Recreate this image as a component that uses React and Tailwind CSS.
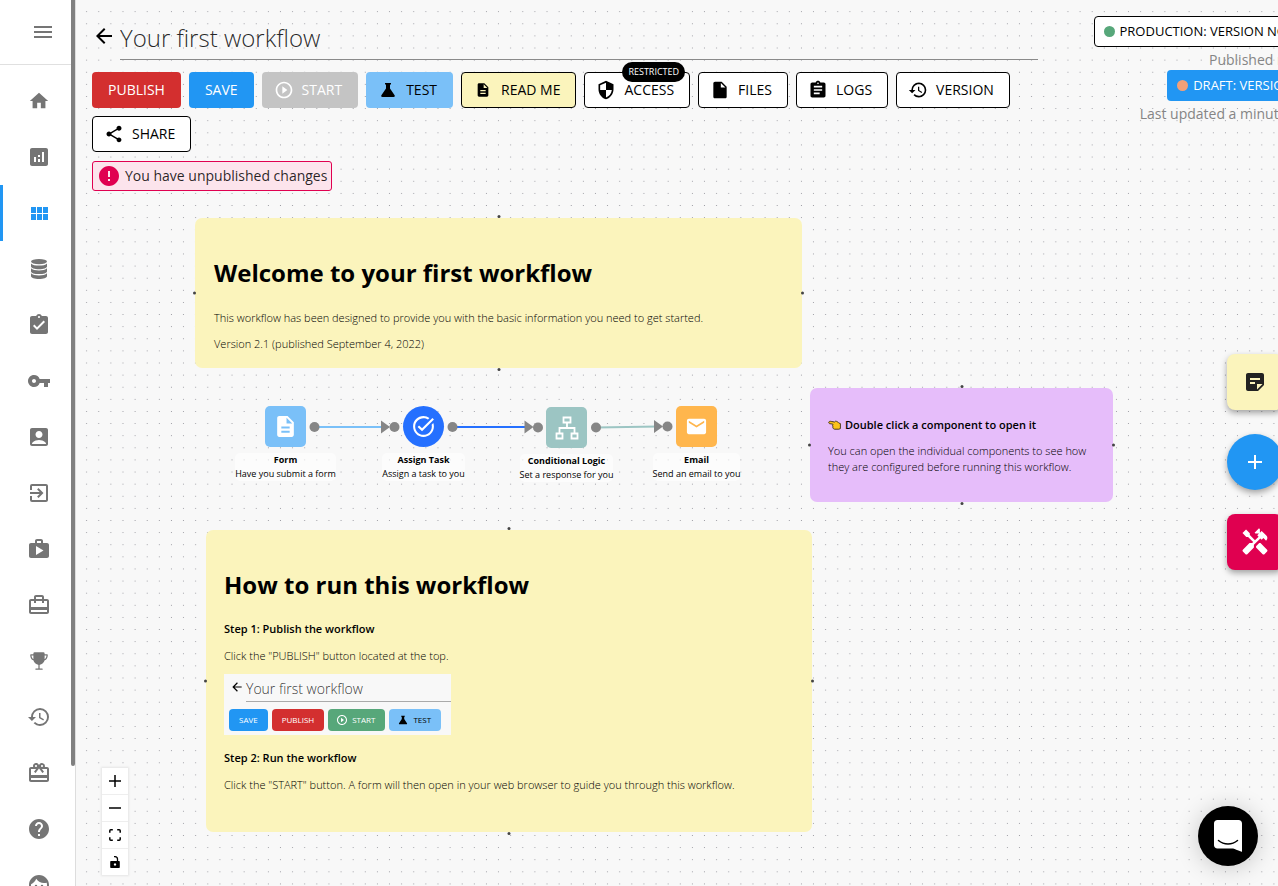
import React from "react";
import {
  MdMenu, MdHome, MdAnalytics, MdAssignmentTurnedIn, MdVpnKey, MdAccountBox, MdExitToApp,
  MdCardTravel, MdHistory, MdCardGiftcard, MdHelp, MdFace, MdArrowBack, MdPlayCircleOutline,
  MdDescription, MdSecurity, MdInsertDriveFile, MdAssignment, MdShare, MdError, MdTaskAlt,
  MdEmail, MdAdd, MdHandyman, MdStickyNote2,
} from "react-icons/md";
import { IoTrophy } from "react-icons/io5";

function Grid() {
  return (
    <svg viewBox="0 0 17 13" className="h-[13px] w-[17px]" fill="currentColor">
      <path d="M0 0h5v6H0zM6 0h5v6H6zM12 0h5v6h-5zM0 7h5v6H0zM6 7h5v6H6zM12 7h5v6h-5z" />
    </svg>
  );
}

function Database() {
  return (
    <svg viewBox="0 0 16 20" className="h-5 w-4" fill="currentColor">
      <ellipse cx="8" cy="2.6" rx="8" ry="2.6" />
      <path d="M0 4.4c1.4 1.500 4.500 2.200 8 2.200s6.600-.7 8-2.200v3.100c0 1.500-3.600 2.700-8 2.700s-8-1.200-8-2.700z" />
      <path d="M0 9.300c1.400 1.500 4.500 2.200 8 2.200s6.600-.7 8-2.200v3.100c0 1.500-3.600 2.700-8 2.700s-8-1.200-8-2.700z" />
      <path d="M0 14.200c1.400 1.500 4.500 2.200 8 2.200s6.600-.7 8-2.200v3.100c0 1.500-3.600 2.700-8 2.700s-8-1.200-8-2.700z" />
    </svg>
  );
}

function PlayCase() {
  return (
    <svg viewBox="0 0 24 24" className="size-6" fill="currentColor">
      <path
        fillRule="evenodd"
        d="M16 6V4c0-1.110-.89-2-2-2h-4c-1.110 0-2 .89-2 2v2H4c-1.110 0-2 .89-2 2v11c0 1.110.89 2 2 2h16c1.110 0 2-.89 2-2V8c0-1.110-.89-2-2-2zm-6-2h4v2h-4zM9 18V9l7.500 4.500z"
      />
    </svg>
  );
}

function Flask({ className }) {
  return (
    <svg viewBox="0 0 20 20" className={className} fill="currentColor">
      <path d="M7 3h6v1.500h-1v4l4.600 6.800c.7 1-.1 1.700-1 1.700H4.400c-.9 0-1.700-.7-1-1.700L8 8.500v-4H7z" />
    </svg>
  );
}

function Sitemap() {
  return (
    <svg viewBox="0 0 24 24" className="size-6" fill="none" stroke="currentColor" strokeWidth="1.800">
      <path d="M8.500 1.500h7v5h-7zM1.500 17.500h6v5h-6zM16.500 17.500h6v5h-6zM12 6.500v5.500M4.500 17.500V12h15v5.500" />
    </svg>
  );
}

function PointLeft() {
  return (
    <svg viewBox="0 0 13 12" className="h-3 w-[13px] shrink-0" role="img" aria-label="Pointing left">
      <path
        d="M.8 3.200c.3-1 1.400-1 2.400-.8l3.300.6 1-.8c1.300 0 2.500.8 3.300 1.800l1.600.6v5l-1.600.6H6.700c-.9 0-1.500-.5-1.400-1.200-.6-.3-.7-.9-.4-1.400-.5-.4-.5-1-.1-1.500.2-.4.300-.7.100-.9L1.500 4.600c-.6-.2-.9-.8-.7-1.400z"
        fill="#fcc21b" stroke="#3b2e12" strokeWidth=".9"
      />
    </svg>
  );
}

const navItems = [
  ["Home", <MdHome className="size-[22px]" />],
  ["Reports", <MdAnalytics className="size-6" />],
  ["Workflows", <Grid />],
  ["Data", <Database />],
  ["Tasks", <MdAssignmentTurnedIn className="size-6" />],
  ["Credentials", <MdVpnKey className="size-6" />],
  ["Contacts", <MdAccountBox className="size-6" />],
  ["Imports", <MdExitToApp className="size-6" />],
  ["Runs", <PlayCase />],
  ["Packages", <MdCardTravel className="size-6" />],
  ["Achievements", <IoTrophy className="size-5" />],
  ["History", <MdHistory className="size-6" />],
  ["Rewards", <MdCardGiftcard className="size-6" />],
  ["Help", <MdHelp className="size-6" />],
  ["Profile", <MdFace className="size-6" />],
];

function Sidebar() {
  return (
    <aside className="relative flex w-[76px] shrink-0 flex-col overflow-hidden border-r border-[#dddddd] bg-white text-[#757575]">
      <div className="flex h-[65px] shrink-0 items-center justify-center border-b border-[#e0e0e0] pl-2.5">
        <button aria-label="Menu"><MdMenu className="size-6" /></button>
      </div>
      <nav className="flex flex-col pt-2">
        {navItems.map(([label, icon]) => (
          <a
            key={label}
            href="#"
            aria-label={label}
            className={
              label === "Workflows"
                ? "flex h-14 shrink-0 items-center justify-center border-l-[3px] border-[#2196f3] text-[#2196f3]"
                : "flex h-14 shrink-0 items-center justify-center border-l-[3px] border-transparent"
            }
          >
            {icon}
          </a>
        ))}
      </nav>
      <div className="absolute top-0 right-0 h-[766px] w-1 rounded-b-sm bg-[#808080]" />
    </aside>
  );
}

const base = "relative flex h-9 items-center gap-2 rounded text-sm ";
const outlined = base + "border border-black pr-[15px] pl-[11px] text-black ";
const actions = [
  { label: "PUBLISH", cls: base + "bg-[#d32f2f] px-4 text-white" },
  { label: "SAVE", cls: base + "bg-[#2196f3] px-4 text-white" },
  { label: "START", cls: base + "bg-[#c4c4c4] pr-4 pl-3 text-white", icon: <MdPlayCircleOutline className="size-5" /> },
  { label: "TEST", cls: base + "bg-[#7ac0f8] pr-4 pl-3 text-black", icon: <Flask className="size-5" /> },
  { label: "READ ME", cls: outlined + "bg-[#fbf4bc]", icon: <MdDescription className="mx-0.5 size-4" /> },
  { label: "ACCESS", cls: outlined + "bg-white", icon: <MdSecurity className="size-5" />, badge: "RESTRICTED" },
  { label: "FILES", cls: outlined + "bg-white", icon: <MdInsertDriveFile className="size-5" /> },
  { label: "LOGS", cls: outlined + "bg-white", icon: <MdAssignment className="size-5" /> },
  { label: "VERSION", cls: outlined + "bg-white", icon: <MdHistory className="size-5" /> },
  { label: "SHARE", cls: outlined + "bg-white", icon: <MdShare className="size-5" /> },
];

function Header() {
  return (
    <header className="relative -mr-9 flex items-start gap-14 pt-4 pl-4">
      <div className="flex min-w-0 flex-1 flex-col items-start">
        <div className="flex w-full items-start gap-1">
          <button aria-label="Back" className="mt-2"><MdArrowBack className="size-6" /></button>
          <input
            aria-label="Workflow name"
            defaultValue="Your first workflow"
            className="h-11 min-w-0 flex-1 border-b border-[#8a8a8a] bg-transparent text-2xl font-light text-black/85 outline-none"
          />
        </div>
        <div className="mt-3 flex flex-wrap gap-2">
          {actions.map((a) => (
            <button key={a.label} className={a.cls} disabled={a.label === "START"}>
              {a.icon}
              {a.label}
              {a.badge && (
                <span className="absolute -top-[11px] right-1 rounded-full bg-black px-1.5 text-[9px] leading-5 font-medium text-white">
                  {a.badge}
                </span>
              )}
            </button>
          ))}
        </div>
        <div className="mt-[9px] flex h-[30px] items-center gap-1 rounded-[3px] border border-[#e00050] bg-[#fce4ec] pr-1 pl-1 text-sm text-black/85">
          <MdError className="size-6 text-[#e00050]" />
          You have unpublished changes
        </div>
      </div>
      <div className="flex shrink-0 flex-col items-end text-sm whitespace-nowrap text-[#858585]">
        <button className="flex h-[31px] items-center gap-[5px] rounded border border-black bg-white px-[9px] text-[13px] text-black">
          <span className="size-[11px] rounded-full bg-[#57a77a]" />
          PRODUCTION: VERSION NONE
        </button>
        <p className="mt-0.5 leading-[21px]">Published never</p>
        <button className="flex h-[31px] items-center gap-[5px] rounded bg-[#2196f3] px-[10px] text-[13px] text-white">
          <span className="size-[11px] rounded-full bg-[#f3a078]" />
          DRAFT: VERSION 1
        </button>
        <p className="mt-0.5 leading-[21px]">Last updated a minute ago</p>
      </div>
    </header>
  );
}

function Handles() {
  return (
    <>
      <i className="absolute -top-[3px] left-1/2 size-[3px] -translate-x-1/2 rounded-full bg-[#444]" />
      <i className="absolute -bottom-[3px] left-1/2 size-[3px] -translate-x-1/2 rounded-full bg-[#444]" />
      <i className="absolute top-1/2 -left-[2px] size-[3px] -translate-y-1/2 rounded-full bg-[#444]" />
      <i className="absolute top-1/2 -right-[2px] size-[3px] -translate-y-1/2 rounded-full bg-[#444]" />
    </>
  );
}

function Preview() {
  const b = "flex h-[22px] items-center rounded-sm text-[8px] font-normal ";
  return (
    <div className="mt-[10px] flex w-[227px] flex-col bg-[#f8f8f8] pb-1">
      <div className="flex items-start gap-0.5 pl-1.5">
        <MdArrowBack className="mt-1.5 size-3.5" />
        <span className="h-7 flex-1 border-b border-[#aaa] text-sm leading-[29px] font-light text-black/80">Your first workflow</span>
      </div>
      <div className="mt-[7px] flex gap-1 pl-[5px]">
        <button className={b + "bg-[#2196f3] px-[10px] text-white"}>SAVE</button>
        <button className={b + "bg-[#d32f2f] px-[10px] text-white"}>PUBLISH</button>
        <button className={b + "gap-1 bg-[#57a77a] pr-[10px] pl-2 text-white"}><MdPlayCircleOutline className="size-3" />START</button>
        <button className={b + "gap-1 bg-[#7ac0f8] pr-[10px] pl-2 text-black"}><Flask className="size-3" />TEST</button>
      </div>
    </div>
  );
}

const nodes = [
  { name: "Form", text: "Have you submit a form", pos: "left-[189px] top-[406px]", box: "rounded-[5px] bg-[#7ac0f8]", icon: <MdDescription className="size-[25px]" /> },
  { name: "Assign Task", text: "Assign a task to you", pos: "left-[327px] top-[406px]", box: "rounded-full bg-[#2570ff]", icon: <MdTaskAlt className="size-[25px]" /> },
  { name: "Conditional Logic", text: "Set a response for you", pos: "left-[470px] top-[407px]", box: "rounded-[5px] bg-[#9cc5c3]", icon: <Sitemap /> },
  { name: "Email", text: "Send an email to you", pos: "left-[600px] top-[406px]", box: "rounded-[5px] bg-[#ffb64d]", icon: <MdEmail className="size-[23px]" /> },
];

function Canvas() {
  return (
    <div className="absolute inset-0 text-[11px] leading-4 font-[330] text-black">
      <svg className="absolute inset-0 h-full w-full" aria-hidden="true">
        <pattern id="dots" x="4.600" y="5.600" width="12.115" height="12.115" patternUnits="userSpaceOnUse">
          <circle cx="6" cy="6" r="0.500" fill="#81818a" />
        </pattern>
        <rect width="100%" height="100%" fill="url(#dots)" />
      </svg>

      <section className="absolute top-[218px] left-[119px] w-[607px] rounded-[7px] bg-[#fbf4bc] px-[19px] pt-10 pb-4">
        <Handles />
        <h1 className="text-2xl leading-[30px] font-bold">Welcome to your first workflow</h1>
        <p className="mt-[22px]">This workflow has been designed to provide you with the basic information you need to get started.</p>
        <p className="mt-[10px]">Version 2.1 (published September 4, 2022)</p>
      </section>

      <section className="absolute top-[388px] left-[734px] w-[303px] rounded-[7px] bg-[#e6bdfa] px-[18px] pt-[29px] pb-[27px]">
        <Handles />
        <p className="flex items-center gap-1 font-semibold"><PointLeft />Double click a component to open it</p>
        <p className="mt-[10px]">You can open the individual components to see how they are configured before running this workflow.</p>
      </section>

      <section className="absolute top-[530px] left-[130px] w-[606px] rounded-[7px] bg-[#fbf4bc] px-[18px] pt-10 pb-[39px]">
        <Handles />
        <h1 className="text-2xl leading-[30px] font-bold">How to run this workflow</h1>
        <p className="mt-[21px] font-semibold">Step 1: Publish the workflow</p>
        <p className="mt-[11px]">Click the "PUBLISH" button located at the top.</p>
        <Preview />
        <p className="mt-[15px] font-semibold">Step 2: Run the workflow</p>
        <p className="mt-[11px]">Click the "START" button. A form will then open in your web browser to guide you through this workflow.</p>
      </section>

      <svg className="absolute top-[416px] left-[230px] h-6 w-[380px]" viewBox="306 416 380 24" aria-hidden="true">
        <path d="M314 427h75" stroke="#7ac0f8" strokeWidth="2" />
        <path d="M452 427h76" stroke="#2570ff" strokeWidth="2" />
        <path d="M596 427.500l62-1" stroke="#9cc5c3" strokeWidth="2" />
        <g fill="#868686">
          <circle cx="314.500" cy="427" r="5" /><circle cx="394.500" cy="427" r="5" />
          <circle cx="452.500" cy="427" r="5" /><circle cx="538" cy="427.500" r="5" />
          <circle cx="596" cy="427.500" r="5" /><circle cx="667.500" cy="426.500" r="5" />
          <path d="M381 420.500l9 6.500-9 6.500zM524.500 420.500l9 6.500-9 6.500zM654 420l9 6.500-9 6.500z" />
        </g>
      </svg>
      {nodes.map((n) => (
        <div key={n.name} className={"absolute flex w-[41px] flex-col items-center font-normal " + n.pos}>
          <div className={"flex size-[41px] items-center justify-center text-white " + n.box}>{n.icon}</div>
          <div className="mt-1.5 rounded-[5px] bg-white/60 text-center text-[9px] leading-[14px] whitespace-nowrap">
            <p className="font-bold">{n.name}</p>
            <p>{n.text}</p>
          </div>
        </div>
      ))}
    </div>
  );
}

function ZoomControls() {
  const b = "flex size-[26px] items-center justify-center bg-white";
  return (
    <div className="absolute bottom-[11px] left-[26px] flex flex-col gap-px bg-[#eeeeee] shadow-[0_0_2px_1px_rgba(0,0,0,0.08)]">
      <button className={b} aria-label="Zoom in">
        <svg viewBox="0 0 12 12" className="size-3"><path d="M6 0v12M0 6h12" stroke="#000" strokeWidth="1.500" /></svg>
      </button>
      <button className={b} aria-label="Zoom out">
        <svg viewBox="0 0 12 12" className="size-3"><path d="M0 6h12" stroke="#000" strokeWidth="1.500" /></svg>
      </button>
      <button className={b} aria-label="Fit view">
        <svg viewBox="0 0 12 12" className="size-3" fill="none" stroke="#000" strokeWidth="1.500">
          <path d="M.8 3.800v-2q0-1 1-1h2M8.200.8h2q1 0 1 1v2M11.200 8.200v2q0 1-1 1h-2M3.800 11.200h-2q-1 0-1-1v-2" />
        </svg>
      </button>
      <button className={b} aria-label="Unlock">
        <svg viewBox="0 0 10 12" className="h-3 w-2.5">
          <path fillRule="evenodd" d="M1 5h8q.8 0 .8.800v5.400q0 .8-.8.800H1q-.8 0-.8-.8V5.800Q.2 5 1 5zM5 7.300a1.200 1.200 0 1 0 .01 0z" />
          <path d="M7.500 5V3Q7.500 1 5 .7L4 .7" fill="none" stroke="#000" strokeWidth="1.300" />
        </svg>
      </button>
    </div>
  );
}

export default function App() {
  const fab = "flex size-14 items-center justify-center shadow-[0_3px_6px_rgba(0,0,0,0.35)] ";
  return (
    <div className="flex h-screen overflow-hidden bg-[#f8f8f8] font-['Open_Sans',sans-serif]">
      <Sidebar />
      <main className="relative min-w-0 flex-1 overflow-hidden">
        <Canvas />
        <Header />
        <ZoomControls />
        <div className="absolute top-[354px] -right-[5px] flex flex-col gap-6">
          <button aria-label="Add note" className={fab + "rounded-lg bg-[#fbf4bc] text-[#222]"}><MdStickyNote2 className="size-6" /></button>
          <button aria-label="Add component" className={fab + "rounded-full bg-[#2196f3] text-white"}><MdAdd className="size-6" /></button>
          <button aria-label="Tools" className={fab + "rounded-lg bg-[#e00050] text-white"}><MdHandyman className="size-[30px]" /></button>
        </div>
        <button aria-label="Open chat" className="absolute right-5 bottom-5 flex size-[60px] items-center justify-center rounded-full bg-black shadow-[0_2px_24px_rgba(0,0,0,0.2)]">
          <svg viewBox="0 0 28 32" className="h-8 w-7">
            <path d="M28 32s-4.700-1.800-8.900-3.400H3.400C1.500 28.600 0 27 0 25.200V3.400C0 1.500 1.500 0 3.400 0h21.200C26.500 0 28 1.500 28 3.400z" fill="#fff" />
            <path d="M4.500 20.500c2.800 2.400 6 3.500 9.500 3.500s6.700-1.100 9.500-3.500" fill="none" stroke="#000" strokeWidth="1.500" strokeLinecap="round" />
          </svg>
        </button>
      </main>
    </div>
  );
}
